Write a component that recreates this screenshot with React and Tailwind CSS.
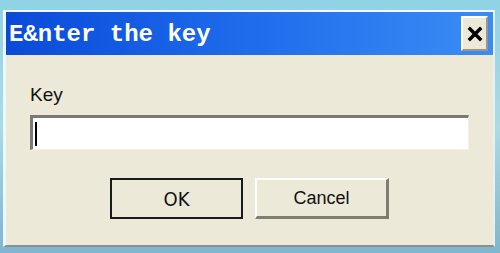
export default function App() {
  return (
    <div className="w-[500px] h-[253px] overflow-hidden bg-gradient-to-b from-[#8fd3e4] via-[#a9dbe8] to-[#7fb6cc] pt-[10px] pl-[3px] pr-[5px] pb-[6px] flex">
      <div className="flex-1 flex flex-col border-t-2 border-l-[3px] border-r-2 border-b-2 border-t-[#f4fafc] border-l-[#eef8fb] border-r-[#f0eee4] border-b-[#8a8f94] bg-[#ece9d8]">
        {/* Title bar */}
        <div className="h-[43px] flex items-center justify-between pl-[3px] pr-[5px] bg-gradient-to-r from-[#0b4ad9] via-[#1f6cec] to-[#3a8df4]">
          <span className="text-white font-bold text-[24px] leading-none font-['Liberation_Mono',monospace] mt-[2px]">
            E&amp;nter the key
          </span>
          <button className="w-[27px] h-[35px] flex items-center justify-center bg-[#ece9d8] border-2 border-t-white border-l-white border-b-[#9a978a] border-r-[#9a978a]">
            <svg width="16" height="16" viewBox="0 0 16 16">
              <path d="M3 3 L13 13 M13 3 L3 13" stroke="#000" strokeWidth="3.4" strokeLinecap="square" />
            </svg>
          </button>
        </div>

        {/* Body */}
        <div className="flex-1 flex flex-col pl-[24px] pr-[22px] pt-[28px] font-['Liberation_Sans',sans-serif]">
          <label className="text-[19px] leading-[23px] text-[#111]">Key</label>
          <div className="mt-[9px] h-[35px] w-[439px] bg-white border-t-[3px] border-l-[3px] border-b border-r border-t-[#7b7a72] border-l-[#7b7a72] border-b-[#f2f0e8] border-r-[#f2f0e8] flex items-center pl-[2px]">
            <div className="w-[2px] h-[24px] bg-black" />
          </div>
          <div className="mt-[28px] flex gap-[12px] pl-[80px]">
            <button className="w-[133px] h-[41px] bg-[#ece9d8] border-2 border-[#1a1a1a] text-[20px] text-[#111] flex items-center justify-center font-['DejaVu_Sans_Condensed','DejaVu_Sans',sans-serif]">
              OK
            </button>
            <button className="w-[134px] h-[41px] bg-[#ece9d8] border-t-2 border-l-2 border-b-[3px] border-r-[3px] border-t-white border-l-white border-b-[#7f7c70] border-r-[#7f7c70] text-[18px] text-[#111] flex items-center justify-center">
              Cancel
            </button>
          </div>
        </div>
      </div>
    </div>
  );
}
